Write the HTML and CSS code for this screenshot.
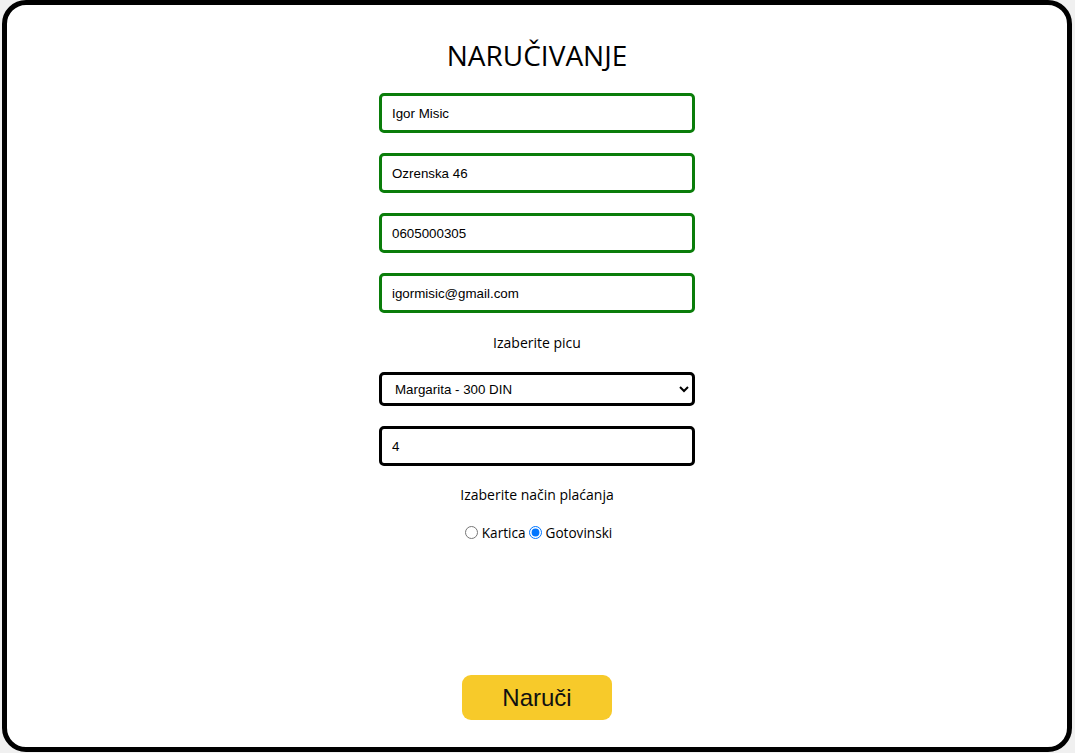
FILE: index.html
```html
<!DOCTYPE html>
<html lang="sr">
<head>
<meta charset="utf-8">
<title>Naručivanje</title>
<link rel="stylesheet" href="styles.css">
</head>
<body>
<div class="frame">
  <h1 class="title">NARUČIVANJE</h1>
  <form class="order-form">
    <input class="field field-ok" type="text" value="Igor Misic">
    <input class="field field-ok" type="text" value="Ozrenska 46">
    <input class="field field-ok" type="text" value="0605000305">
    <input class="field field-ok" type="email" value="igormisic@gmail.com">
    <p class="label label-pizza">Izaberite picu</p>
    <select class="select">
      <option>Margarita - 300 DIN</option>
      <option>Capricciosa - 350 DIN</option>
    </select>
    <input class="field field-plain" type="text" value="4">
    <p class="label label-pay">Izaberite način plaćanja</p>
    <div class="radios">
      <input class="radio" type="radio" name="pay" id="kartica"><label for="kartica">Kartica</label>
      <input class="radio" type="radio" name="pay" id="gotovina" checked><label for="gotovina">Gotovinski</label>
    </div>
    <button class="submit" type="button">Naruči</button>
  </form>
</div>
</body>
</html>
```

FILE: styles.css
```css
html, body {
  margin: 0;
  padding: 0;
  background: #f0f0f0;
}

.frame {
  box-sizing: border-box;
  height: 752px;
  margin: 0 3px 1px 2px;
  border: 5px solid #000;
  border-radius: 24px;
  background: #fff;
  display: flex;
  flex-direction: column;
  align-items: center;
}

.title {
  margin: 31px 0 0;
  font-family: "Open Sans", sans-serif;
  font-weight: 400;
  font-size: 28px;
  line-height: 38px;
  color: #000;
}

.order-form {
  display: flex;
  flex-direction: column;
  align-items: center;
  margin-top: 19px;
}

.field {
  box-sizing: border-box;
  width: 316px;
  height: 40px;
  margin: 0 0 20px;
  padding: 0 10px;
  border: 3px solid #000;
  border-radius: 5px;
  font-family: "Liberation Sans", Arial, sans-serif;
  font-size: 13.33px;
  color: #000;
  background: #fff;
  outline: none;
}

.field-ok {
  border-color: #0a7d0a;
}

.label {
  margin: 0;
  font-family: "Open Sans", sans-serif;
  font-size: 14px;
  line-height: 19px;
  color: #000;
}

.label-pizza {
  margin-bottom: 20px;
}

.label-pay {
  margin-top: -1px;
}

.select {
  box-sizing: border-box;
  width: 316px;
  height: 34px;
  margin: 0 0 20px;
  padding: 0 8px 0 9px;
  border: 3px solid #000;
  border-radius: 5px;
  font-family: "Liberation Sans", Arial, sans-serif;
  font-size: 13.33px;
  color: #000;
  background: #fff;
}

.field-plain {
  margin-bottom: 20px;
}

.radios {
  display: flex;
  align-items: center;
  margin-top: 19px;
  font-family: "Open Sans", sans-serif;
  font-size: 13.6px;
  line-height: 19px;
  color: #000;
}

.radio {
  margin: 0 4px 0 3px;
  width: 13px;
  height: 13px;
}

.submit {
  margin-top: 133px;
  width: 150px;
  height: 45px;
  border: none;
  border-radius: 9px;
  background: #f7ca2a;
  font-family: "Liberation Sans", Arial, sans-serif;
  font-size: 24px;
  color: #111;
  cursor: pointer;
}
```
